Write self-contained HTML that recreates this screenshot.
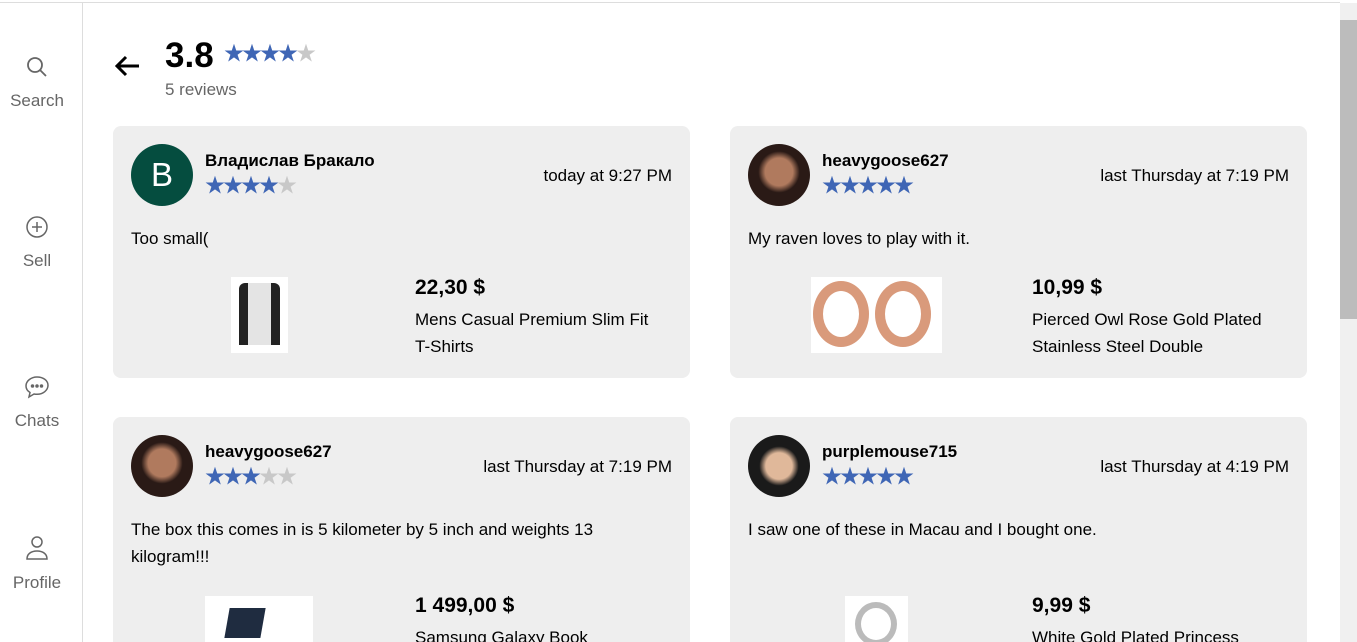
<!DOCTYPE html>
<html style="overflow:hidden;width:1357px;height:642px"><head><meta charset="utf-8"><style>
*{margin:0;padding:0;box-sizing:border-box}
body{width:1357px;height:642px;overflow:hidden;background:#fff;font-family:"Liberation Sans","Noto Sans CJK SC",sans-serif;color:#000;position:relative}
.topline{position:absolute;left:0;top:2px;width:1340px;height:1px;background:#ddd}
.side{position:absolute;left:0;top:3px;width:83px;height:639px;border-right:1px solid #ddd}
.nav{position:absolute;left:0;width:74px;text-align:center;color:#666;font-size:17px}
.nav svg{display:block;margin:0 auto 12px}
.sb{position:absolute;left:1340px;top:3px;width:17px;height:639px;background:#f0f0f0}
.thumb{position:absolute;left:1340px;top:20px;width:17px;height:299px;background:#bcbcbc}
.card{position:absolute;width:577px;background:#eee;border-radius:8px;overflow:hidden}
.abs{position:absolute}
.name{font-weight:bold;font-size:17px}
.date{font-size:17px;right:18px}
.txt{font-size:17px;line-height:27px}
.price{font-weight:bold;font-size:21px}
.desc{font-size:17px;line-height:27px}
.av{width:62px;height:62px;border-radius:50%}
.s{color:#3f66b5;font-size:20px;letter-spacing:-2px;line-height:18px}
.g{color:#c8c8c8}
</style></head><body>
<div class="topline"></div>
<div class="side">
 <div class="nav" style="top:52px"><svg width="24" height="24" viewBox="0 0 24 24" fill="none" stroke="#666" stroke-width="1.8"><circle cx="10" cy="10" r="7"/><path d="M15 15l6 6"/></svg>Search</div>
 <div class="nav" style="top:212px"><svg width="24" height="24" viewBox="0 0 24 24" fill="none" stroke="#666" stroke-width="1.5"><circle cx="12" cy="12" r="10"/><path d="M12 7v10M7 12h10"/></svg>Sell</div>
 <div class="nav" style="top:372px"><svg width="26" height="24" viewBox="0 0 26 24" fill="none" stroke="#666" stroke-width="1.5"><path d="M13 2C7 2 2 6 2 11c0 3 1.5 5 4 6.5L5 22l5-3c1 .2 2 .3 3 .3 6 0 11-4 11-9S19 2 13 2z"/><circle cx="8.5" cy="11" r="1" fill="#666"/><circle cx="13" cy="11" r="1" fill="#666"/><circle cx="17.5" cy="11" r="1" fill="#666"/></svg>Chats</div>
 <div class="nav" style="top:532px"><svg width="24" height="26" viewBox="0 0 24 26" fill="none" stroke="#666" stroke-width="1.5"><circle cx="12" cy="7" r="5"/><path d="M2 24c0-5 4-8 10-8s10 3 10 8z"/></svg>Profile</div>
</div>
<div class="sb"></div><div class="thumb"></div>
<svg class="abs" style="left:113px;top:54px" width="28" height="24" viewBox="0 0 28 24" fill="none" stroke="#000" stroke-width="3"><path d="M26 12H4M13 3l-9 9 9 9"/></svg>
<div class="abs" style="left:165px;top:36px;font-size:35px;font-weight:bold">3.8</div>
<div class="abs s" style="left:224px;top:45px">★★★★<span class="g">★</span></div>
<div class="abs" style="left:165px;top:80px;font-size:17px;color:#666">5 reviews</div>

<div class="card" style="left:113px;top:126px;height:252px">
 <div class="abs av" style="left:18px;top:18px;background:#054d3f;color:#fff;font-size:33px;text-align:center;line-height:62px">B</div>
 <div class="abs name" style="left:92px;top:25px">Владислав Бракало</div>
 <div class="abs s" style="left:92px;top:51px">★★★★<span class="g">★</span></div>
 <div class="abs date" style="top:40px">today at 9:27 PM</div>
 <div class="abs txt" style="left:18px;top:99px">Too small(</div>
 <div class="abs" style="left:118px;top:151px;width:57px;height:76px;background:#fff"><div style="margin:6px 8px;height:62px;background:linear-gradient(90deg,#222 0 22%,#e4e4e4 22% 78%,#222 78%);border-radius:6px 6px 0 0"></div></div>
 <div class="abs price" style="left:302px;top:150px">22,30 $</div>
 <div class="abs desc" style="left:302px;top:180px">Mens Casual Premium Slim Fit<br>T-Shirts</div>
</div>

<div class="card" style="left:730px;top:126px;height:252px">
 <div class="abs av" style="left:18px;top:18px;background:radial-gradient(circle at 50% 45%,#b07a5e 0 30%,#2a1a16 45%)"></div>
 <div class="abs name" style="left:92px;top:25px">heavygoose627</div>
 <div class="abs s" style="left:92px;top:51px">★★★★★</div>
 <div class="abs date" style="top:40px">last Thursday at 7:19 PM</div>
 <div class="abs txt" style="left:18px;top:99px">My raven loves to play with it.</div>
 <div class="abs" style="left:81px;top:151px;width:131px;height:76px;background:#fff">
  <div class="abs" style="left:2px;top:4px;width:56px;height:66px;border-radius:50%;border:10px solid #d99a7b"></div>
  <div class="abs" style="left:64px;top:4px;width:56px;height:66px;border-radius:50%;border:10px solid #d99a7b"></div></div>
 <div class="abs price" style="left:302px;top:150px">10,99 $</div>
 <div class="abs desc" style="left:302px;top:180px">Pierced Owl Rose Gold Plated<br>Stainless Steel Double</div>
</div>

<div class="card" style="left:113px;top:417px;height:225px;border-radius:8px 8px 0 0">
 <div class="abs av" style="left:18px;top:18px;background:radial-gradient(circle at 50% 45%,#b07a5e 0 30%,#2a1a16 45%)"></div>
 <div class="abs name" style="left:92px;top:25px">heavygoose627</div>
 <div class="abs s" style="left:92px;top:51px">★★★<span class="g">★★</span></div>
 <div class="abs date" style="top:40px">last Thursday at 7:19 PM</div>
 <div class="abs txt" style="left:18px;top:99px">The box this comes in is 5 kilometer by 5 inch and weights 13<br>kilogram!!!</div>
 <div class="abs" style="left:92px;top:179px;width:108px;height:60px;background:#fff"><div class="abs" style="left:22px;top:12px;width:36px;height:30px;background:#1f2c40;transform:skew(-10deg)"></div></div>
 <div class="abs price" style="left:302px;top:177px">1 499,00 $</div>
 <div class="abs desc" style="left:302px;top:207px">Samsung Galaxy Book</div>
</div>

<div class="card" style="left:730px;top:417px;height:225px;border-radius:8px 8px 0 0">
 <div class="abs av" style="left:18px;top:18px;background:radial-gradient(circle at 50% 50%,#e0b89a 0 30%,#1a1a1a 45%)"></div>
 <div class="abs name" style="left:92px;top:25px">purplemouse715</div>
 <div class="abs s" style="left:92px;top:51px">★★★★★</div>
 <div class="abs date" style="top:40px">last Thursday at 4:19 PM</div>
 <div class="abs txt" style="left:18px;top:99px">I saw one of these in Macau and I bought one.</div>
 <div class="abs" style="left:115px;top:179px;width:63px;height:60px;background:#fff"><div class="abs" style="left:10px;top:6px;width:42px;height:44px;border-radius:50%;border:6px solid #bbb"></div></div>
 <div class="abs price" style="left:302px;top:177px">9,99 $</div>
 <div class="abs desc" style="left:302px;top:207px">White Gold Plated Princess</div>
</div>
</body></html>
